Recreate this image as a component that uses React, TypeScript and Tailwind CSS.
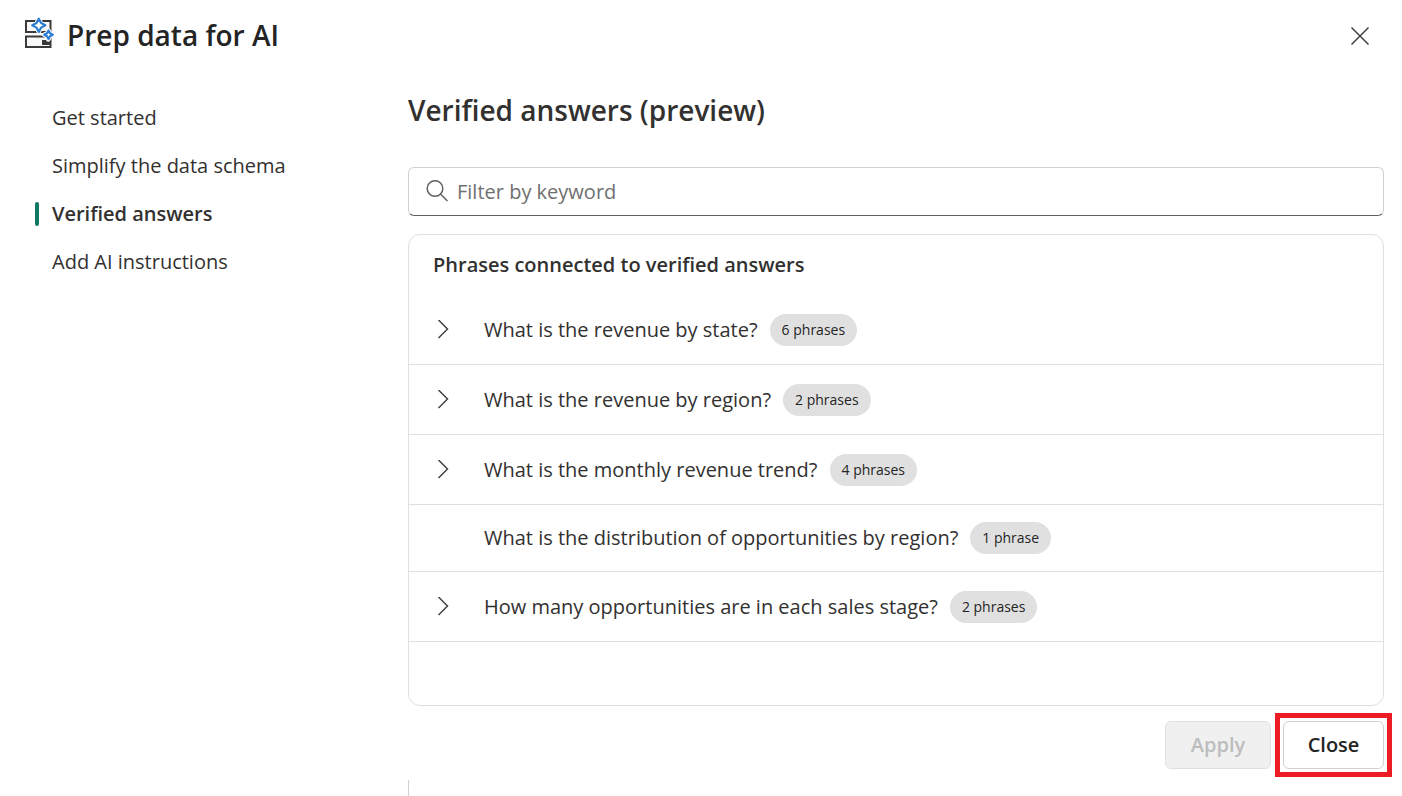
import { useState } from "react";

type Phrase = { text: string; count: number };

const phrases: Phrase[] = [
  { text: "What is the revenue by state?", count: 6 },
  { text: "What is the revenue by region?", count: 2 },
  { text: "What is the monthly revenue trend?", count: 4 },
  { text: "What is the distribution of opportunities by region?", count: 1 },
  { text: "How many opportunities are in each sales stage?", count: 2 },
];

const sections = ["Get started", "Simplify the data schema", "Verified answers", "Add AI instructions"];

function PrepIcon() {
  return (
    <svg className="size-8 shrink-0 overflow-visible" viewBox="0 0 32 32" fill="none" aria-hidden="true">
      <path d="M2 2h24.500v11H2zM2 17.500h24.500V28H2z" fill="#f8f8f8" stroke="#3b3a39" strokeWidth="2" />
      <path d="M18 21h4l1 1.500h3V26h-8z" fill="#3b3a39" />
      <path d="M14.800 -0.300l2.100 4.500 4.500 2.100-4.500 2.100-2.100 4.500-2.100-4.500-4.500-2.100 4.500-2.100z" fill="#fff" stroke="#fff" strokeWidth="4.500" strokeLinejoin="round" />
      <path d="M24.500 11.500l1.400 2.900 2.900 1.400-2.900 1.400-1.400 2.900-1.400-2.900-2.900-1.400 2.900-1.400z" fill="#fff" stroke="#fff" strokeWidth="4.500" strokeLinejoin="round" />
      <path d="M14.800 -0.300l2.300 4.300 4.300 2.300-4.300 2.300-2.300 4.300-2.300-4.300-4.300-2.300 4.300-2.300z" stroke="#2b7cd3" strokeWidth="2.200" strokeLinejoin="round" />
      <path d="M24.500 11.500l1.500 2.800 2.800 1.500-2.800 1.500-1.500 2.800-1.500-2.800-2.800-1.500 2.800-1.500z" stroke="#2b7cd3" strokeWidth="2.200" strokeLinejoin="round" />
    </svg>
  );
}

function PhraseRow({ text, count }: Phrase) {
  const [open, setOpen] = useState(false);
  return (
    <li className="flex items-center border-b border-[#e0e0e0] py-[17px] pl-6">
      <div className="flex w-[51px] shrink-0">
        {count > 1 && (
          <button type="button" aria-label={text} aria-expanded={open} onClick={() => setOpen(!open)} className="flex h-[35px] w-5 items-center justify-center">
            <svg className="size-5" viewBox="0 0 20 20" fill="none" stroke="#424242" strokeWidth="1.5" aria-hidden="true">
              <path d="M5.500 0l9 9-9 9" />
            </svg>
          </button>
        )}
      </div>
      <span>{text}</span>
      <span className="ml-3 rounded-full bg-[#e0e0e0] px-3 py-1 text-sm leading-6 text-[#242424]">
        {count} {count > 1 ? "phrases" : "phrase"}
      </span>
    </li>
  );
}

export default function App() {
  const [active, setActive] = useState("Verified answers");
  return (
    <div className="flex min-h-screen flex-col bg-white font-['Open_Sans','Noto_Sans',sans-serif] text-xl leading-7 text-[#323130]">
      <header className="flex h-[70px] items-center justify-between pr-7 pl-6">
        <div className="flex items-center gap-[11px]">
          <PrepIcon />
          <h1 className="text-[28px] leading-9 font-semibold text-[#242424]">Prep data for AI</h1>
        </div>
        <button type="button" aria-label="Close dialog" className="flex size-7 items-center justify-center">
          <svg className="size-5" viewBox="0 0 20 20" fill="none" stroke="#424242" strokeWidth="1.5" aria-hidden="true">
            <path d="M1.500 2.500l17 17M18.500 2.500l-17 17" />
          </svg>
        </button>
      </header>
      <div className="flex flex-1">
        <nav className="w-[408px] shrink-0 pt-6 pl-[35px]">
          <ul className="flex flex-col">
            {sections.map((s) => (
              <li key={s} className="flex h-12 items-center gap-[13px]">
                <span className={active === s ? "h-6 w-1 rounded-full bg-[#117865]" : "h-6 w-1"} />
                <a href="#" onClick={() => setActive(s)} className={active === s ? "font-semibold" : ""}>
                  {s}
                </a>
              </li>
            ))}
          </ul>
        </nav>
        <main className="flex min-w-0 flex-1 flex-col">
          <div className="flex flex-col pt-[22px] pr-[18px]">
            <h2 className="text-[28px] leading-9 font-semibold">Verified answers (preview)</h2>
            <label className="mt-[39px] flex h-[49px] items-center gap-2 rounded-md border border-[#d1d1d1] border-b-[#616161] px-4">
              <svg className="size-6 shrink-0" viewBox="0 0 24 24" fill="none" stroke="#616161" strokeWidth="1.500" aria-hidden="true">
                <circle cx="10" cy="8.500" r="7.800" />
                <path d="M15.500 14l7 7" />
              </svg>
              <input type="text" aria-label="Filter by keyword" placeholder="Filter by keyword" className="min-w-0 flex-1 outline-none placeholder:text-[#707070]" />
            </label>
            <section className="mt-[18px] rounded-xl border border-[#e0e0e0] pb-[63px]">
              <h3 className="px-6 py-4 font-semibold">Phrases connected to verified answers</h3>
              <ul>
                {phrases.map((p) => (
                  <PhraseRow key={p.text} {...p} />
                ))}
              </ul>
            </section>
            <div className="mt-[15px] flex h-12 justify-end gap-3 font-semibold">
              <button type="button" disabled className="w-[106px] rounded-md border border-[#e0e0e0] bg-[#f0f0f0] text-[#bdbdbd]">
                Apply
              </button>
              <div className="relative flex">
                <button type="button" className="w-[101px] rounded-md border border-[#d1d1d1] bg-white text-[#242424]">
                  Close
                </button>
                <span className="pointer-events-none absolute -inset-2 border-[5px] border-[#ed1c24]" />
              </div>
            </div>
          </div>
          <div className="mt-[11px] min-h-4 flex-1 border-l border-[#d1d1d1]" />
        </main>
      </div>
    </div>
  );
}
